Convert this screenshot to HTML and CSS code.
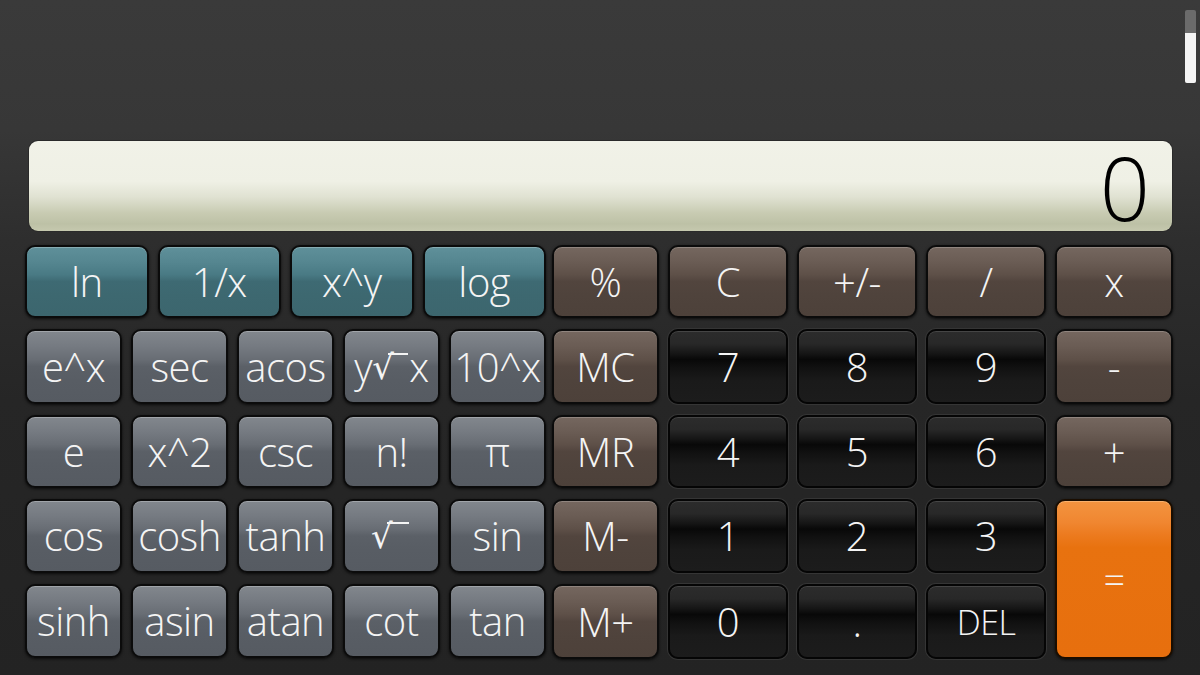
FILE: index.html
```html
<!DOCTYPE html>
<html>
<head>
<meta charset="utf-8">
<link rel="stylesheet" href="styles.css">
</head>
<body>
<div class="app">
  <div class="scroll"><div class="thumb"></div></div>
  <div class="display"><span class="value">0</span></div>
  <div class="keypad">
    <div class="sci">
      <div class="row row4">
        <div class="key teal">ln</div>
        <div class="key teal">1/x</div>
        <div class="key teal">x^y</div>
        <div class="key teal">log</div>
      </div>
      <div class="row row5">
        <div class="key gray">e^x</div>
        <div class="key gray">sec</div>
        <div class="key gray">acos</div>
        <div class="key gray">y<span class="rad">√<span class="bar"></span></span>x</div>
        <div class="key gray">10^x</div>
      </div>
      <div class="row row5">
        <div class="key gray">e</div>
        <div class="key gray">x^2</div>
        <div class="key gray">csc</div>
        <div class="key gray">n!</div>
        <div class="key gray">π</div>
      </div>
      <div class="row row5">
        <div class="key gray">cos</div>
        <div class="key gray">cosh</div>
        <div class="key gray">tanh</div>
        <div class="key gray"><span class="rad solo">√<span class="bar"></span></span></div>
        <div class="key gray">sin</div>
      </div>
      <div class="row row5">
        <div class="key gray">sinh</div>
        <div class="key gray">asin</div>
        <div class="key gray">atan</div>
        <div class="key gray">cot</div>
        <div class="key gray">tan</div>
      </div>
    </div>
    <div class="std">
      <div class="key brown">%</div>
      <div class="key brown">C</div>
      <div class="key brown">+/-</div>
      <div class="key brown">/</div>
      <div class="key brown">x</div>
      <div class="key brown">MC</div>
      <div class="key black">7</div>
      <div class="key black">8</div>
      <div class="key black">9</div>
      <div class="key brown">-</div>
      <div class="key brown">MR</div>
      <div class="key black">4</div>
      <div class="key black">5</div>
      <div class="key black">6</div>
      <div class="key brown">+</div>
      <div class="key brown">M-</div>
      <div class="key black">1</div>
      <div class="key black">2</div>
      <div class="key black">3</div>
      <div class="key orange equals">=</div>
      <div class="key brown">M+</div>
      <div class="key black">0</div>
      <div class="key black">.</div>
      <div class="key black del">DEL</div>
    </div>
  </div>
</div>
</body>
</html>
```
FILE: styles.css
```css
html, body {
  margin: 0;
  padding: 0;
}
body {
  width: 1200px;
  height: 675px;
  overflow: hidden;
  background: linear-gradient(#3a3a3a 0px, #373737 130px, #2e2e2e 240px, #262626 400px, #232323 675px);
  font-family: "Open Sans", "Noto Sans", sans-serif;
}
.app {
  position: relative;
  width: 1200px;
  height: 675px;
  padding-top: 141px;
  box-sizing: border-box;
}
.scroll {
  position: absolute;
  left: 1185px;
  top: 10px;
  width: 11px;
  height: 73px;
  background: #6b6b6b;
  border-radius: 2px;
}
.thumb {
  position: absolute;
  left: 0;
  right: 0;
  bottom: 0;
  height: 50px;
  background: #f4f4f4;
  border-radius: 0 0 2px 2px;
}
.display {
  margin-left: 29px;
  width: 1143px;
  height: 90px;
  box-sizing: border-box;
  border-radius: 9px;
  background: linear-gradient(#f1f2e8 0%, #eff0e5 45%, #e0e2d2 62%, #c8cbb2 80%, #bdc1a6 92%, #c5c8ae 100%);
  box-shadow: 0 0 0 1px #2a2a2a;
  display: flex;
  align-items: center;
  justify-content: flex-end;
  padding-right: 22px;
}
.value {
  font-size: 88px;
  font-weight: 300;
  color: #000;
  line-height: 1;
  margin-top: 2px;
}
.keypad {
  display: flex;
  gap: 6px;
  margin-top: 14px;
  margin-left: 25px;
}
.sci {
  width: 521px;
  display: grid;
  grid-template-rows: 73px 75px 73px 74px 74px;
  row-gap: 11px;
}
.row {
  display: grid;
  column-gap: 9px;
}
.row4 {
  grid-template-columns: repeat(4, 1fr);
}
.row5 {
  grid-template-columns: repeat(5, 1fr);
}
.std {
  width: 621px;
  display: grid;
  grid-template-columns: 107px 120px 120px 120px 118px;
  grid-template-rows: 73px 75px 73px 74px 75px;
  column-gap: 9px;
  row-gap: 11px;
}
.key {
  display: flex;
  align-items: center;
  justify-content: center;
  box-sizing: border-box;
  border: 2px solid #0b0b0b;
  border-radius: 10px;
  color: #f4f4f4;
  font-size: 40px;
  font-weight: 300;
  line-height: 1;
  letter-spacing: -0.5px;
  white-space: nowrap;
  box-shadow: 0 1px 3px rgba(0, 0, 0, 0.7);
}
.teal {
  background: linear-gradient(#5f909a 0%, #558690 22%, #497a84 40%, #3e6a73 50%, #3d6870 70%, #3c666e 100%);
  box-shadow: inset 0 1px 0 rgba(255, 255, 255, 0.25), 0 1px 3px rgba(0, 0, 0, 0.7);
}
.gray {
  background: linear-gradient(#82878d 0%, #757a81 22%, #686d74 40%, #5b6067 50%, #585d64 70%, #565b62 100%);
  box-shadow: inset 0 1px 0 rgba(255, 255, 255, 0.25), 0 1px 3px rgba(0, 0, 0, 0.7);
}
.brown {
  background: linear-gradient(#75675f 0%, #6a5c54 22%, #5e5048 40%, #52453e 50%, #4f433c 70%, #4d413a 100%);
  box-shadow: inset 0 1px 0 rgba(255, 255, 255, 0.2), 0 1px 3px rgba(0, 0, 0, 0.7);
}
.black {
  border-color: #050505;
  background: linear-gradient(#2c2c2c 0%, #282828 18%, #151515 32%, #080808 40%, #111111 52%, #1a1a1a 70%, #1c1c1c 100%);
  box-shadow: inset 0 1px 0 rgba(255, 255, 255, 0.12), 0 0 0 1px #353535;
}
.orange {
  background: linear-gradient(#f39440 0%, #f08630 14%, #ec7a1e 22%, #e8720f 30%, #e76f0e 100%);
  box-shadow: inset 0 1px 0 rgba(255, 220, 180, 0.4), 0 1px 3px rgba(0, 0, 0, 0.7);
  border-color: #1a0d00;
}
.equals {
  grid-column: 5;
  grid-row: 4 / span 2;
  font-size: 38px;
}
.del {
  font-size: 34px;
}
.rad {
  position: relative;
  display: inline-block;
  font-family: "DejaVu Serif", serif;
  font-size: 34px;
  padding-right: 16px;
}
.bar {
  position: absolute;
  left: 16px;
  top: 3px;
  width: 20px;
  height: 2px;
  background: #f4f4f4;
}
.solo {
  padding-right: 20px;
}
.solo .bar {
  width: 22px;
}
```
